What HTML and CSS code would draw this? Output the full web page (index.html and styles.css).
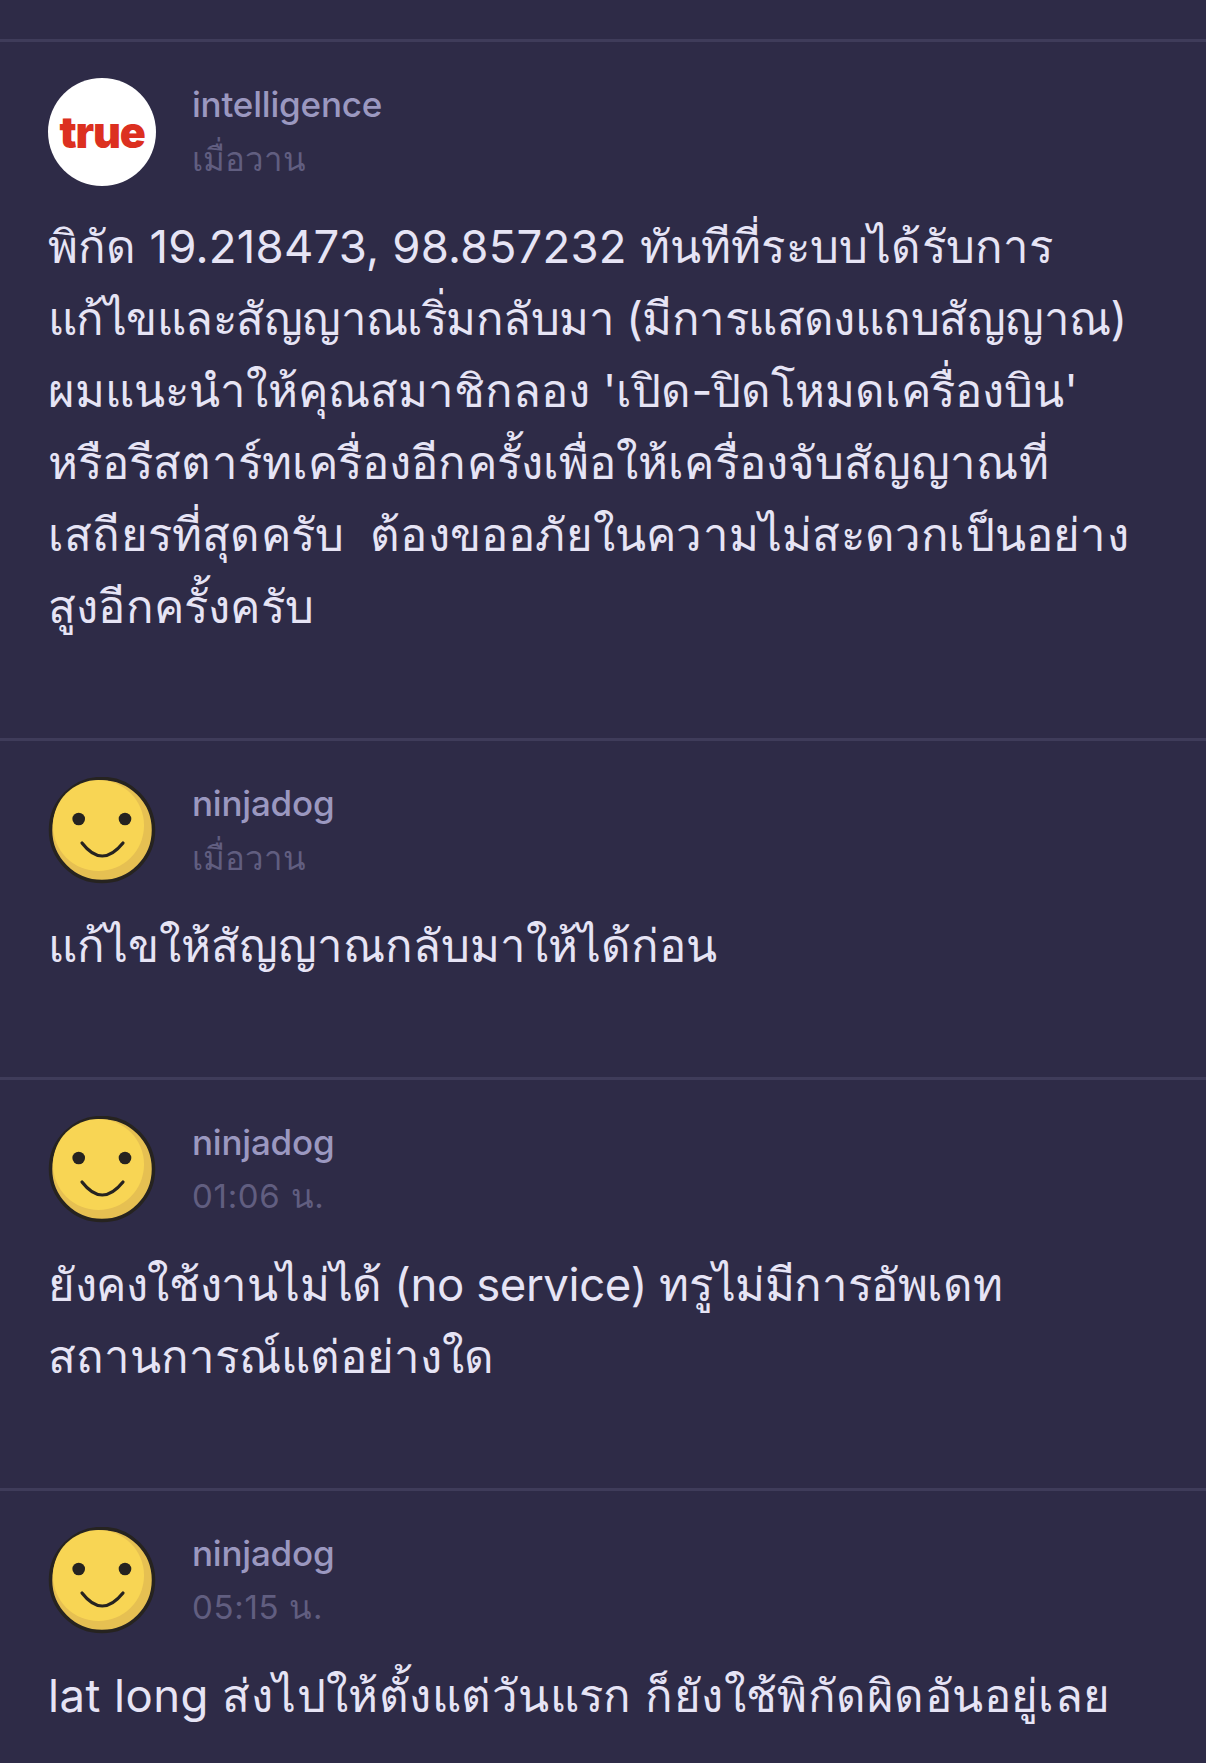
FILE: index.html
```html
<!DOCTYPE html>
<html lang="th">
<head>
<meta charset="utf-8">
<title>Comments</title>
<link rel="stylesheet" href="styles.css">
</head>
<body>
<main class="list">
<article class="post first">
<header class="head">
<div class="avatar true-logo"><span class="true-text">true</span></div>
<div class="meta"><div class="name">intelligence</div><div class="time">เมื่อวาน</div></div>
</header>
<p class="body"><span class="line wider">พิกัด 19.218473, 98.857232 ทันทีที่ระบบได้รับการ</span><span class="line narrowest">แก้ไขและสัญญาณเริ่มกลับมา (มีการแสดงแถบสัญญาณ)</span><span class="line">ผมแนะนำให้คุณสมาชิกลอง 'เปิด-ปิดโหมดเครื่องบิน'</span><span class="line wide">หรือรีสตาร์ทเครื่องอีกครั้งเพื่อให้เครื่องจับสัญญาณที่</span><span class="line wider">เสถียรที่สุดครับ&nbsp; ต้องขออภัยในความไม่สะดวกเป็นอย่าง</span><span class="line wider">สูงอีกครั้งครับ</span></p>
</article>
<article class="post">
<header class="head">
<svg class="avatar" viewBox="0 0 108 108"><circle cx="54" cy="53" r="51.5" fill="#e6c052" stroke="#262320" stroke-width="3.5"/><circle cx="50.5" cy="48.5" r="45.5" fill="#f8d554"/><circle cx="30.7" cy="42" r="6.3" fill="#262320"/><circle cx="77" cy="42" r="6.3" fill="#262320"/><path d="M34 66 Q54 92 75 66" fill="none" stroke="#262320" stroke-width="3.2" stroke-linecap="round"/></svg>
<div class="meta"><div class="name">ninjadog</div><div class="time">เมื่อวาน</div></div>
</header>
<p class="body"><span class="line">แก้ไขให้สัญญาณกลับมาให้ได้ก่อน</span></p>
</article>
<article class="post">
<header class="head">
<svg class="avatar" viewBox="0 0 108 108"><circle cx="54" cy="53" r="51.5" fill="#e6c052" stroke="#262320" stroke-width="3.5"/><circle cx="50.5" cy="48.5" r="45.5" fill="#f8d554"/><circle cx="30.7" cy="42" r="6.3" fill="#262320"/><circle cx="77" cy="42" r="6.3" fill="#262320"/><path d="M34 66 Q54 92 75 66" fill="none" stroke="#262320" stroke-width="3.2" stroke-linecap="round"/></svg>
<div class="meta"><div class="name">ninjadog</div><div class="time clock">01:06 น.</div></div>
</header>
<p class="body"><span class="line narrow">ยังคงใช้งานไม่ได้ (no service) ทรูไม่มีการอัพเดท</span><span class="line">สถานการณ์แต่อย่างใด</span></p>
</article>
<article class="post">
<header class="head">
<svg class="avatar" viewBox="0 0 108 108"><circle cx="54" cy="53" r="51.5" fill="#e6c052" stroke="#262320" stroke-width="3.5"/><circle cx="50.5" cy="48.5" r="45.5" fill="#f8d554"/><circle cx="30.7" cy="42" r="6.3" fill="#262320"/><circle cx="77" cy="42" r="6.3" fill="#262320"/><path d="M34 66 Q54 92 75 66" fill="none" stroke="#262320" stroke-width="3.2" stroke-linecap="round"/></svg>
<div class="meta"><div class="name">ninjadog</div><div class="time clock">05:15 น.</div></div>
</header>
<p class="body"><span class="line widest">lat long ส่งไปให้ตั้งแต่วันแรก ก็ยังใช้พิกัดผิดอันอยู่เลย</span></p>
</article>
</main>
</body>
</html>
```
FILE: styles.css
```css
html, body { margin: 0; padding: 0; }
body { background: #2e2b47; font-family: "Inter", "Noto Sans", "Noto Sans CJK SC", sans-serif; height: 1763px; overflow: hidden; }
.list { padding-top: 39px; }
.post { border-top: 3px solid #3f3c5a; padding: 36px 48px 0; box-sizing: border-box; }
.post:nth-child(1) { height: 699px; }
.post:nth-child(2) { height: 339px; }
.post:nth-child(3) { height: 411px; }
.post:nth-child(4) { height: 320px; }
.head { display: flex; gap: 36px; align-items: center; }
.avatar { width: 108px; height: 108px; flex: none; display: block; }
.true-logo { background: #fff; border-radius: 50%; display: flex; align-items: center; justify-content: center; }
.true-text { color: #dc3020; font-weight: 900; font-size: 43px; letter-spacing: -1.2px; line-height: 1; }
.meta { display: flex; flex-direction: column; gap: 15px; }
.name { color: #9b98c0; font-size: 35px; font-weight: 500; letter-spacing: -0.2px; line-height: 40px; margin-top: -2px; }
.time { color: #615e80; font-size: 33px; line-height: 40px; }
.clock { letter-spacing: 0.7px; margin-top: -1px; }
.body { margin: 25px 0 0; color: #e6e4f5; font-size: 45.5px; line-height: 72px; white-space: nowrap; }
.line { display: block; }
.wide { letter-spacing: 0.1px; }
.wider { letter-spacing: 0.2px; }
.widest { letter-spacing: 0.45px; }
.narrow { letter-spacing: -0.4px; }
.narrowest { letter-spacing: -0.55px; }
```
